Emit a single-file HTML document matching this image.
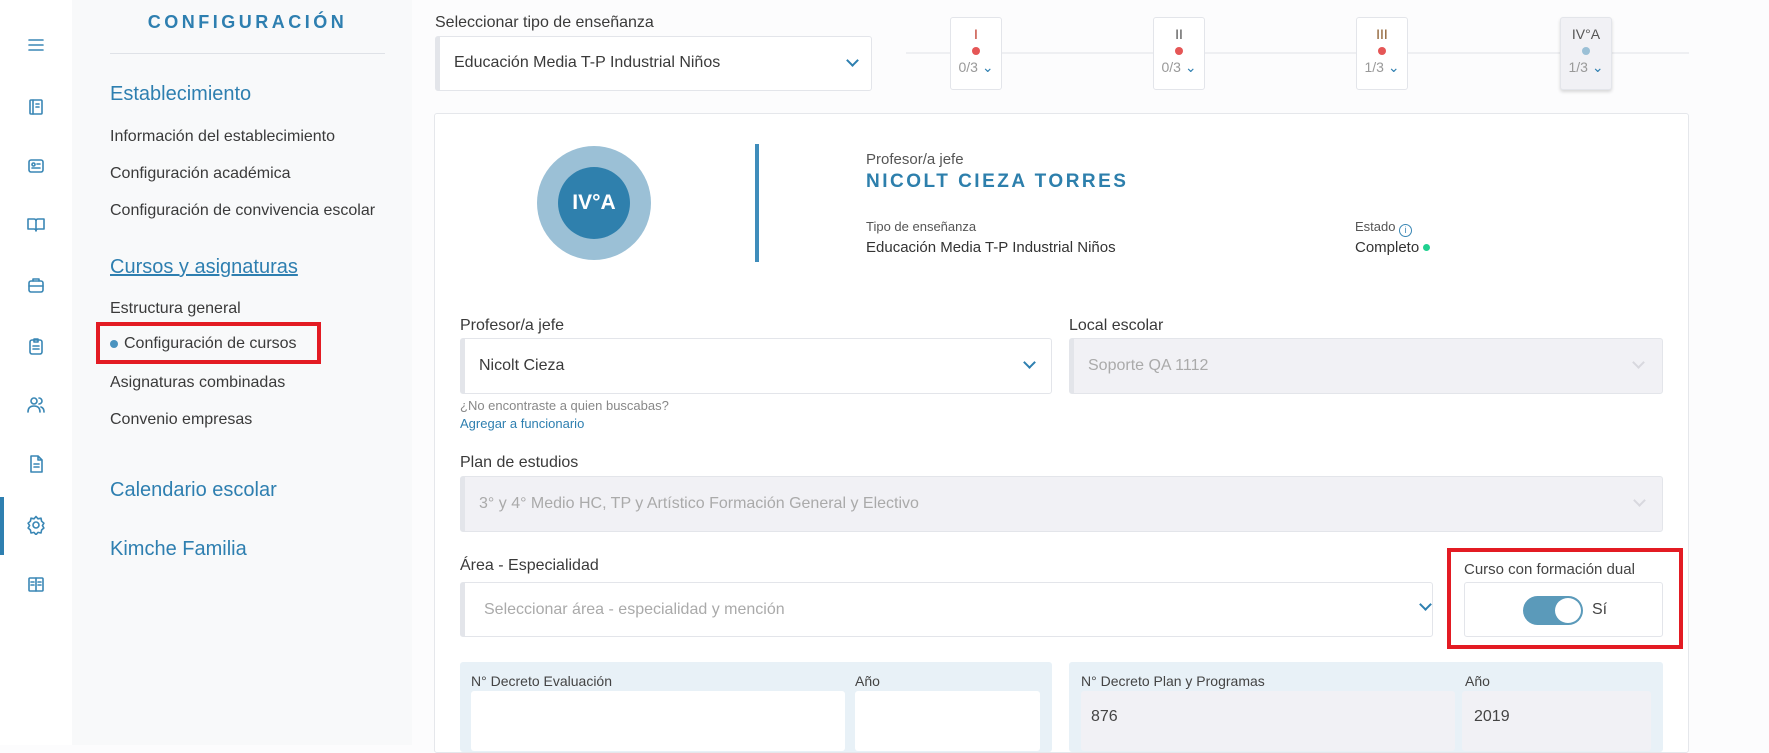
<!DOCTYPE html>
<html><head><meta charset="utf-8"><style>
*{box-sizing:border-box;margin:0;padding:0}
body{width:1769px;height:745px;overflow:hidden;background:#fcfcfd;font-family:"Liberation Sans",sans-serif;color:#3a3a3a;position:relative}
.a{position:absolute}
.ic{position:absolute;left:26px;width:20px;height:20px}
.ic svg{width:20px;height:20px;fill:none;stroke:#3a87b5;stroke-width:1.6;stroke-linecap:round;stroke-linejoin:round}
.nav{position:absolute;left:110px;font-size:16px;color:#3a3a3a}
.h{position:absolute;left:110px;font-size:20px;color:#2e7fb0}
.sel{position:absolute;background:#fff;border:1px solid #e3e5ea;border-left:5px solid #e3e5ea;border-radius:3px}
.dis{background:#f1f1f5}
.lbl{position:absolute;font-size:16px;color:#3a3a3a}
.chev{position:absolute;width:9px;height:9px;border-right:2px solid #2e7fb0;border-bottom:2px solid #2e7fb0;transform:rotate(45deg)}
.chev.g{border-color:#d8d8de}
.step{position:absolute;top:17px;width:52px;height:73px;background:#fff;border:1px solid #e3e5ea;border-radius:3px;text-align:center;font-size:14px}
.step .n{margin-top:8px;color:#c0392b;height:16px}
.step .d{width:8px;height:8px;border-radius:50%;background:#e55656;margin:5px auto 4px}
.step .f{color:#999;font-size:14px}
</style></head><body>
<div class="a" style="left:0;top:0;width:72px;height:745px;background:#fff"></div>
<div class="a" style="left:0;top:497px;width:4px;height:58px;background:#2e7fb0"></div>
<div class="ic" style="top:35px"><svg viewBox="0 0 20 20"><path d="M3 5h14M3 10h14M3 15h14"/></svg></div>
<div class="ic" style="top:97px"><svg viewBox="0 0 20 20"><rect x="4" y="3" width="12" height="14" rx="1"/><path d="M7 3v14M10 7h3M10 10h3"/></svg></div>
<div class="ic" style="top:156px"><svg viewBox="0 0 20 20"><rect x="3" y="4" width="14" height="12" rx="2"/><circle cx="7.5" cy="8.5" r="1.5"/><path d="M6 12h8M11 8h3"/></svg></div>
<div class="ic" style="top:214px"><svg viewBox="0 0 20 20"><path d="M2 5h6q2 0 2 2v10q0-2-2-2H2zM18 5h-6q-2 0-2 2v10q0-2 2-2h6z"/></svg></div>
<div class="ic" style="top:275px"><svg viewBox="0 0 20 20"><rect x="3" y="6" width="14" height="11" rx="2"/><path d="M7 6V4h6v2M3 11h14"/></svg></div>
<div class="ic" style="top:336px"><svg viewBox="0 0 20 20"><rect x="4" y="4" width="12" height="14" rx="2"/><path d="M8 3h4v3H8zM7 10h6M7 13h6"/></svg></div>
<div class="ic" style="top:395px"><svg viewBox="0 0 20 20"><circle cx="8" cy="6" r="3"/><path d="M2 17q0-6 6-6t6 6M13 3a3 3 0 0 1 0 6M15 12q3 1 3 5"/></svg></div>
<div class="ic" style="top:454px"><svg viewBox="0 0 20 20"><path d="M5 2h7l4 4v12H5zM12 2v4h4M8 10h5M8 13h5"/></svg></div>
<div class="ic" style="top:515px"><svg viewBox="0 0 20 20"><circle cx="10" cy="10" r="3"/><path d="M10 1.5l2 2.3 3-.6.6 3 2.3 2-1.5 2.4 1.5 2.4-2.3 2-.6 3-3-.6-2 2.3-2-2.3-3 .6-.6-3-2.3-2 1.5-2.4-1.5-2.4 2.3-2 .6-3 3 .6z"/></svg></div>
<div class="ic" style="top:574px"><svg viewBox="0 0 20 20"><rect x="3" y="4" width="14" height="13" rx="1"/><path d="M10 4v13M5 8h3M12 8h3M5 11h3M12 11h3"/></svg></div>
<div class="a" style="left:72px;top:0;width:340px;height:745px;background:#f8f9fa"></div>
<div class="a" style="left:110px;top:12px;width:275px;text-align:center;font-size:18px;font-weight:bold;letter-spacing:3.5px;color:#2e7fb0">CONFIGURACIÓN</div>
<div class="a" style="left:110px;top:53px;width:275px;height:1px;background:#dfe2e7"></div>
<div class="h" style="top:83px">Establecimiento</div>
<div class="nav" style="top:128px">Información del establecimiento</div>
<div class="nav" style="top:165px">Configuración académica</div>
<div class="nav" style="top:202px">Configuración de convivencia escolar</div>
<div class="h" style="top:256px;text-decoration:underline">Cursos y asignaturas</div>
<div class="nav" style="top:300px">Estructura general</div>
<div class="a" style="left:96px;top:322px;width:225px;height:42px;border:4px solid #e31b23"></div>
<div class="a" style="left:110px;top:340px;width:8px;height:8px;border-radius:50%;background:#4a93bf"></div>
<div class="nav" style="top:335px;left:124px">Configuración de cursos</div>
<div class="nav" style="top:374px">Asignaturas combinadas</div>
<div class="nav" style="top:411px">Convenio empresas</div>
<div class="h" style="top:479px">Calendario escolar</div>
<div class="h" style="top:538px">Kimche Familia</div>
<div class="lbl" style="left:435px;top:14px">Seleccionar tipo de enseñanza</div>
<div class="sel" style="left:435px;top:36px;width:437px;height:55px"><div class="a" style="left:14px;top:17px;font-size:16px">Educación Media T-P Industrial Niños</div><div class="chev" style="left:408px;top:19px"></div></div>
<div class="a" style="left:906px;top:52px;width:783px;height:2px;background:#eeeff2"></div>
<div class="step" style="left:950px"><div class="n">I</div><div class="d"></div><div class="f">0/3 <span style="color:#2e7fb0">⌄</span></div></div>
<div class="step" style="left:1153px"><div class="n" style="color:#555">II</div><div class="d"></div><div class="f">0/3 <span style="color:#2e7fb0">⌄</span></div></div>
<div class="step" style="left:1356px"><div class="n" style="color:#8a5a2b">III</div><div class="d"></div><div class="f">1/3 <span style="color:#2e7fb0">⌄</span></div></div>
<div class="step" style="left:1560px;background:#f1f1f5;box-shadow:0 2px 3px rgba(0,0,0,.15)"><div class="n" style="color:#555">IV°A</div><div class="d" style="background:#9bc0d6"></div><div class="f">1/3 <span style="color:#2e7fb0">⌄</span></div></div>
<div class="a" style="left:434px;top:113px;width:1255px;height:640px;background:#fff;border:1px solid #e5e7eb;border-radius:3px"></div>
<div class="a" style="left:537px;top:146px;width:114px;height:114px;border-radius:50%;background:#9bc0d6"></div>
<div class="a" style="left:558px;top:167px;width:72px;height:72px;border-radius:50%;background:#2f80ad;color:#fff;font-weight:bold;font-size:21px;line-height:72px;text-align:center">IV°A</div>
<div class="a" style="left:755px;top:144px;width:4px;height:118px;background:#3f8dbb"></div>
<div class="a" style="left:866px;top:151px;font-size:15px;color:#555">Profesor/a jefe</div>
<div class="a" style="left:866px;top:171px;font-size:19px;font-weight:bold;letter-spacing:2.5px;color:#2d7fac">NICOLT CIEZA TORRES</div>
<div class="a" style="left:866px;top:219px;font-size:13px;color:#555">Tipo de enseñanza</div>
<div class="a" style="left:866px;top:239px;font-size:15px;color:#333">Educación Media T-P Industrial Niños</div>
<div class="a" style="left:1355px;top:219px;font-size:13px;color:#555">Estado <span style="display:inline-block;width:13px;height:13px;border:1.5px solid #3a87b5;border-radius:50%;font-size:9px;line-height:10px;text-align:center;color:#3a87b5;vertical-align:-2px">i</span></div>
<div class="a" style="left:1355px;top:239px;font-size:15px;color:#333">Completo <span style="display:inline-block;width:7px;height:7px;border-radius:50%;background:#1fd08f;vertical-align:1px"></span></div>
<div class="lbl" style="left:460px;top:317px">Profesor/a jefe</div>
<div class="sel" style="left:460px;top:338px;width:592px;height:56px"><div class="a" style="left:14px;top:18px;font-size:16px">Nicolt Cieza</div><div class="chev" style="left:560px;top:19px"></div></div>
<div class="lbl" style="left:1069px;top:317px">Local escolar</div>
<div class="sel dis" style="left:1069px;top:338px;width:594px;height:56px"><div class="a" style="left:14px;top:18px;font-size:16px;color:#aaa">Soporte QA 1112</div><div class="chev g" style="left:560px;top:19px"></div></div>
<div class="a" style="left:460px;top:398px;font-size:13px;color:#888">¿No encontraste a quien buscabas?</div>
<div class="a" style="left:460px;top:416px;font-size:13px;color:#2e7fb0">Agregar a funcionario</div>
<div class="lbl" style="left:460px;top:454px">Plan de estudios</div>
<div class="sel dis" style="left:460px;top:476px;width:1203px;height:56px"><div class="a" style="left:14px;top:18px;font-size:16px;color:#aaa">3° y 4° Medio HC, TP y Artístico Formación General y Electivo</div><div class="chev g" style="left:1170px;top:19px"></div></div>
<div class="lbl" style="left:460px;top:557px">Área - Especialidad</div>
<div class="sel" style="left:460px;top:582px;width:973px;height:55px"><div class="a" style="left:19px;top:18px;font-size:16px;color:#aaa">Seleccionar área - especialidad y mención</div><div class="chev" style="left:956px;top:17px"></div></div>
<div class="a" style="left:1447px;top:548px;width:236px;height:101px;border:4px solid #e31b23"></div>
<div class="a" style="left:1464px;top:561px;font-size:15px;color:#444">Curso con formación dual</div>
<div class="a" style="left:1464px;top:582px;width:199px;height:55px;background:#fff;border:1px solid #e3e5ea;border-radius:3px"></div>
<div class="a" style="left:1523px;top:596px;width:60px;height:29px;border-radius:15px;background:#5b9aba"></div>
<div class="a" style="left:1554px;top:597px;width:28px;height:27px;border-radius:50%;background:#fff;border:1px solid #5b9aba"></div>
<div class="a" style="left:1592px;top:601px;font-size:16px;color:#444">Sí</div>
<div class="a" style="left:460px;top:662px;width:592px;height:90px;background:#e8f1f7;border-radius:3px"></div>
<div class="a" style="left:471px;top:673px;font-size:14px;color:#444">N° Decreto Evaluación</div>
<div class="a" style="left:855px;top:673px;font-size:14px;color:#444">Año</div>
<div class="a" style="left:471px;top:691px;width:374px;height:60px;background:#fff;border-radius:3px"></div>
<div class="a" style="left:855px;top:691px;width:185px;height:60px;background:#fff;border-radius:3px"></div>
<div class="a" style="left:1069px;top:662px;width:594px;height:90px;background:#e8f1f7;border-radius:3px"></div>
<div class="a" style="left:1081px;top:673px;font-size:14px;color:#444">N° Decreto Plan y Programas</div>
<div class="a" style="left:1465px;top:673px;font-size:14px;color:#444">Año</div>
<div class="a" style="left:1081px;top:691px;width:374px;height:60px;background:#f1f1f5;border-radius:3px"></div>
<div class="a" style="left:1462px;top:691px;width:189px;height:60px;background:#f1f1f5;border-radius:3px"></div>
<div class="a" style="left:1091px;top:708px;font-size:16px;color:#444">876</div>
<div class="a" style="left:1474px;top:708px;font-size:16px;color:#444">2019</div>
</body></html>
